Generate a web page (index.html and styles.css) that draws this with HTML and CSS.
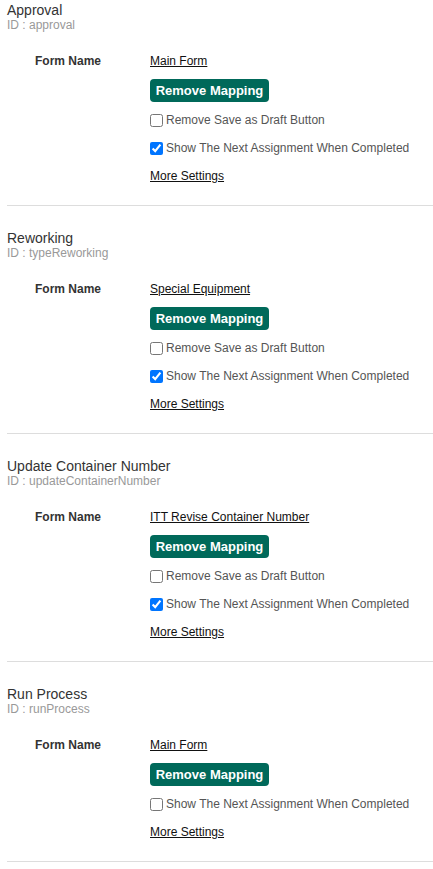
FILE: index.html
```html
<!DOCTYPE html>
<html>
<head>
<meta charset="utf-8">
<link rel="stylesheet" href="styles.css">
</head>
<body>
<div class="list">
  <section class="task">
    <div class="task-title">Approval</div>
    <div class="task-id">ID : approval</div>
    <div class="mapping">
      <div class="label">Form Name</div>
      <div class="fields">
        <a class="link" href="#">Main Form</a>
        <button class="btn">Remove Mapping</button>
        <label class="check"><input type="checkbox"> Remove Save as Draft Button</label>
        <label class="check"><input type="checkbox" checked> Show The Next Assignment When Completed</label>
        <a class="link more" href="#">More Settings</a>
      </div>
    </div>
  </section>
  <section class="task">
    <div class="task-title">Reworking</div>
    <div class="task-id">ID : typeReworking</div>
    <div class="mapping">
      <div class="label">Form Name</div>
      <div class="fields">
        <a class="link" href="#">Special Equipment</a>
        <button class="btn">Remove Mapping</button>
        <label class="check"><input type="checkbox"> Remove Save as Draft Button</label>
        <label class="check"><input type="checkbox" checked> Show The Next Assignment When Completed</label>
        <a class="link more" href="#">More Settings</a>
      </div>
    </div>
  </section>
  <section class="task">
    <div class="task-title">Update Container Number</div>
    <div class="task-id">ID : updateContainerNumber</div>
    <div class="mapping">
      <div class="label">Form Name</div>
      <div class="fields">
        <a class="link" href="#">ITT Revise Container Number</a>
        <button class="btn">Remove Mapping</button>
        <label class="check"><input type="checkbox"> Remove Save as Draft Button</label>
        <label class="check"><input type="checkbox" checked> Show The Next Assignment When Completed</label>
        <a class="link more" href="#">More Settings</a>
      </div>
    </div>
  </section>
  <section class="task">
    <div class="task-title">Run Process</div>
    <div class="task-id">ID : runProcess</div>
    <div class="mapping">
      <div class="label">Form Name</div>
      <div class="fields">
        <a class="link" href="#">Main Form</a>
        <button class="btn">Remove Mapping</button>
        <label class="check"><input type="checkbox"> Show The Next Assignment When Completed</label>
        <a class="link more" href="#">More Settings</a>
      </div>
    </div>
  </section>
</div>
</body>
</html>
```
FILE: styles.css
```css
html, body {
  margin: 0;
  padding: 0;
  background: #fff;
}
body {
  font-family: "Liberation Sans", Arial, sans-serif;
  color: #333;
}
.list {
  padding-left: 7px;
  padding-top: 2px;
}
.task {
  border-bottom: 1px solid #ddd;
  padding-bottom: 21px;
  margin-bottom: 24px;
}
.task-title {
  font-size: 14px;
  line-height: 16px;
  color: #333;
}
.task-id {
  font-size: 12px;
  line-height: 14px;
  color: #999;
}
.mapping {
  display: flex;
  margin-top: 21px;
  padding-left: 28px;
}
.label {
  width: 115px;
  flex: none;
  font-size: 12px;
  line-height: 16px;
  font-weight: bold;
  color: #333;
}
.fields {
  display: flex;
  flex-direction: column;
  align-items: flex-start;
}
.link {
  font-size: 12px;
  line-height: 16px;
  color: #111;
  text-decoration: underline;
}
.btn {
  margin-top: 10px;
  height: 23px;
  width: 119px;
  padding: 0;
  border: none;
  border-radius: 4px;
  background: #00695a;
  color: #fff;
  font-family: "Liberation Sans", Arial, sans-serif;
  font-size: 13px;
  font-weight: bold;
}
.check {
  display: flex;
  align-items: center;
  margin-top: 10px;
  font-size: 12px;
  line-height: 16px;
  color: #555;
  margin-bottom: -2px;
}
.check + .check {
  margin-top: 14px;
}
.check input {
  margin: 0 3px 0 0;
  width: 13px;
  height: 13px;
}
.more {
  margin-top: 14px;
}
```
